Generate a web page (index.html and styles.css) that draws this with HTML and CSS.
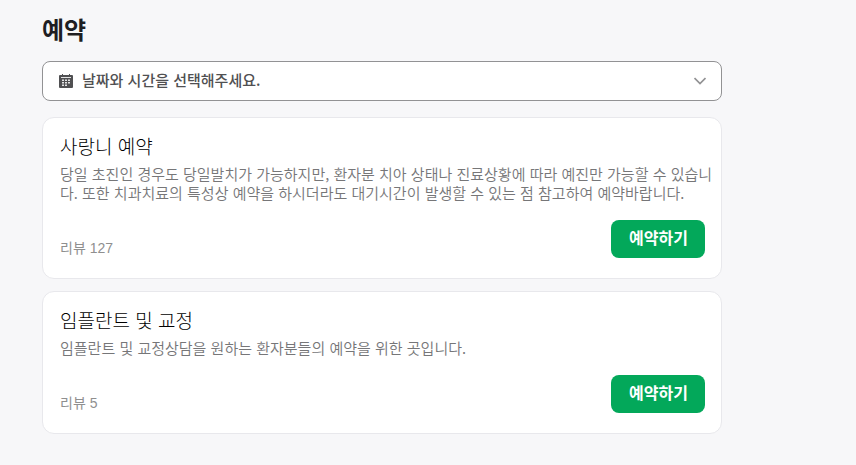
FILE: index.html
```html
<!DOCTYPE html>
<html lang="ko">

<head>
    <meta charset="UTF-8">
    <meta name="viewport" content="width=device-width, initial-scale=1.0">
    <title>예약</title>
    <link rel="stylesheet" href="styles.css">
</head>

<body>
    <main class="booking">
        <h1 class="booking-title">예약</h1>
        <button type="button" class="date-picker">
            <svg class="icon-calendar" viewBox="0 0 14 14" width="14" height="14" aria-hidden="true">
                <path fill="#505052" d="M1 1h2V0h1v1h6V0h1v1h2a1 1 0 0 1 1 1v11a1 1 0 0 1-1 1H1a1 1 0 0 1-1-1V2a1 1 0 0 1 1-1z" />
                <path fill="#e4e4e4" d="M2 3h10v1H2zM3 5.500h2v1.500H3zM6 5.500h2v1.500H6zM9 5.500h2v1.500H9zM3 8h2v1.500H3zM6 8h2v1.500H6zM9 8h2v1.500H9zM3 10.500h2v1.500H3zM6 10.500h2v1.500H6z" />
            </svg>
            <span class="date-label">날짜와 시간을 선택해주세요.</span>
            <svg class="icon-arrow" viewBox="0 0 12 8" width="12" height="8" aria-hidden="true">
                <path fill="none" stroke="#929294" stroke-width="1.7" d="M.5 1L6 6.500l5.500-5.500" />
            </svg>
        </button>
        <ul class="booking-list">
            <li class="card">
                <h2 class="card-title">사랑니 예약</h2>
                <p class="card-text">당일 초진인 경우도 당일발치가 가능하지만, 환자분 치아 상태나 진료상황에 따라 예진만 가능할 수 있습니다. 또한 치과치료의 특성상 예약을 하시더라도 대기시간이 발생할 수 있는 점 참고하여 예약바랍니다.</p>
                <div class="card-bottom">
                    <span class="review">리뷰 127</span>
                    <button type="button" class="book-button">예약하기</button>
                </div>
            </li>
            <li class="card">
                <h2 class="card-title">임플란트 및 교정</h2>
                <p class="card-text">임플란트 및 교정상담을 원하는 환자분들의 예약을 위한 곳입니다.</p>
                <div class="card-bottom">
                    <span class="review">리뷰 5</span>
                    <button type="button" class="book-button">예약하기</button>
                </div>
            </li>
        </ul>
    </main>
</body>

</html>
```

FILE: styles.css
```css
html,
body {
    margin: 0;
    background-color: #f7f7f9;
    font-family: "Noto Sans CJK KR", sans-serif;
    color: #1e1e23;
}

.booking {
    max-width: 680px;
    margin-left: 42px;
    margin-right: 42px;
    padding: 14px 0 31px;
}

.booking-title {
    margin: 0 0 17px;
    font-size: 24px;
    line-height: 30px;
    font-weight: 700;
}

.date-picker {
    display: flex;
    align-items: center;
    gap: 9px;
    width: 100%;
    height: 40px;
    padding: 0 15px 0 16px;
    border: 1px solid #929294;
    border-radius: 8px;
    background-color: #fff;
    font-family: inherit;
    font-size: 15px;
    line-height: 20px;
    font-weight: 500;
    color: #505052;
    text-align: left;
}

.date-label {
    flex: 1;
    padding-bottom: 2px;
}

.booking-list {
    display: flex;
    flex-direction: column;
    gap: 12px;
    margin: 16px 0 0;
    padding: 0;
    list-style: none;
}

.card {
    padding: 15px 8px 20px 17px;
    border: 1px solid #e8e8ec;
    border-radius: 12px;
    background-color: #fff;
}

.card-title {
    margin: 0;
    font-size: 19px;
    line-height: 26px;
    font-weight: 300;
    color: #000;
}

.card-text {
    margin: 5px 0 0;
    font-size: 15px;
    line-height: 19px;
    font-weight: 350;
    color: #767678;
    word-break: break-all;
}

.card-bottom {
    display: flex;
    align-items: flex-end;
    justify-content: space-between;
    margin-top: 18px;
    padding-right: 8px;
}

.review {
    font-family: "Liberation Sans", "Noto Sans CJK KR", sans-serif;
    font-size: 14px;
    line-height: 20px;
    color: #8f8f8f;
}

.book-button {
    height: 38px;
    padding: 0 17px 4px 18px;
    border: 0;
    border-radius: 8px;
    background-color: #03a85a;
    font-family: inherit;
    font-size: 16px;
    line-height: 20px;
    font-weight: 700;
    color: #fff;
}
```
